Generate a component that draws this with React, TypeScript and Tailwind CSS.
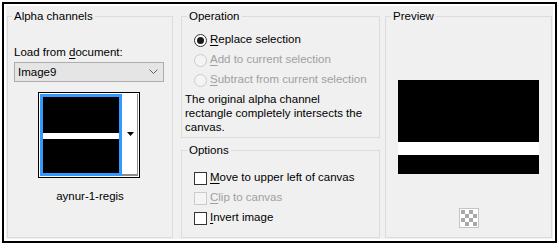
import React from 'react';

const font = { fontFamily: '"Liberation Sans", Arial, sans-serif' };

function U({ children }: { children: React.ReactNode }) {
  return <span className="underline underline-offset-[2px]">{children}</span>;
}

function Radio({ checked, disabled, children }: { checked?: boolean; disabled?: boolean; children: React.ReactNode }) {
  return (
    <div className="flex h-[20px] items-center">
      <span
        className={`ml-[9px] flex h-[13px] w-[13px] items-center justify-center rounded-full border ${
          disabled ? 'border-[#cccccc] bg-[#f4f4f4]' : 'border-[#333333] bg-white'
        }`}>
        {checked && <span className="h-[7px] w-[7px] rounded-full bg-[#1a1a1a]" />}
      </span>
      <span className={`ml-[3px] ${disabled ? 'text-[#a0a0a0]' : 'text-black'}`}>{children}</span>
    </div>
  );
}

function Check({ disabled, children }: { disabled?: boolean; children: React.ReactNode }) {
  return (
    <div className="flex h-[20px] items-center">
      <span
        className={`ml-[9px] h-[13px] w-[13px] border ${
          disabled ? 'border-[#cccccc] bg-[#f4f4f4]' : 'border-[#333333] bg-white'
        }`}
      />
      <span className={`ml-[3px] ${disabled ? 'text-[#a0a0a0]' : 'text-black'}`}>{children}</span>
    </div>
  );
}

export default function App() {
  return (
    <div className="h-[248px] w-[559px] bg-white pl-[2px] pt-[2px] text-[11.5px] text-black" style={font}>
      <div className="h-[241px] w-[555px] border-2 border-black bg-white p-[2px]">
        <div className="flex h-full bg-[#f0f0f0] pl-[1px]">
          {/* Alpha channels */}
          <fieldset className="mt-[3px] flex h-[229px] w-[166px] flex-col border border-[#dcdcdc] px-[6px]">
            <legend className="-ml-[2px] px-[2px] leading-[14px]">Alpha channels</legend>
            <p className="mt-[22px] leading-[14px]">
              Load from <U>d</U>ocument:
            </p>
            <div className="mt-[3px] flex h-[20px] w-[150px] items-center justify-between border border-[#adadad] bg-[#e5e5e5] pl-[3px] pr-[5px]">
              <span className="leading-[14px]">Image9</span>
              <svg width="9" height="6" viewBox="0 0 9 6">
                <polyline points="0.5,0.5 4.5,4.5 8.5,0.5" fill="none" stroke="#606060" strokeWidth="1" />
              </svg>
            </div>
            <div className="ml-[24px] mt-[10px] flex h-[86px] w-[102px] border border-black bg-white p-[1px]">
              <div className="flex h-[82px] w-[82px] flex-col border-[3px] border-[#3399ff] bg-black">
                <div className="mt-[36px] h-[6px] bg-white" />
              </div>
              <div className="flex flex-1 items-center justify-center border-b-2 border-r border-[#8c8c8c] pl-[1px]">
                <svg width="7" height="4" viewBox="0 0 7 4">
                  <polygon points="0,0 7,0 3.5,4" fill="#000" />
                </svg>
              </div>
            </div>
            <p className="mt-[11px] text-center leading-[14px]">aynur-1-regis</p>
          </fieldset>

          {/* Operation + Options */}
          <div className="ml-[8px] flex w-[199px] flex-col">
            <fieldset className="mt-[3px] flex h-[129px] flex-col border border-[#dcdcdc] pl-[3px]">
              <legend className="ml-[2px] px-[2px] leading-[14px]">Operation</legend>
              <div className="mt-[7px]">
                <Radio checked>
                  <U>R</U>eplace selection
                </Radio>
                <Radio disabled>
                  <U>A</U>dd to current selection
                </Radio>
                <Radio disabled>
                  <U>S</U>ubtract from current selection
                </Radio>
              </div>
              <p className="mt-[2px] leading-[14px]">
                The original alpha channel
                <br />
                rectangle completely intersects the
                <br />
                canvas.
              </p>
            </fieldset>
            <fieldset className="mt-[5px] flex h-[95px] flex-col border border-[#dcdcdc] pl-[3px]">
              <legend className="ml-[2px] px-[2px] leading-[14px]">Options</legend>
              <div className="mt-[11px]">
                <Check>
                  <U>M</U>ove to upper left of canvas
                </Check>
                <Check disabled>
                  <U>C</U>lip to canvas
                </Check>
                <Check>
                  <U>I</U>nvert image
                </Check>
              </div>
            </fieldset>
          </div>

          {/* Preview */}
          <fieldset className="ml-[5px] mt-[3px] flex h-[229px] w-[167px] flex-col items-center border border-[#dcdcdc] pl-[5px]">
            <legend className="px-[2px] leading-[14px]">Preview</legend>
            <div className="-ml-[5px] mt-[57px] flex h-[94px] w-[141px] flex-col bg-black">
              <div className="mt-[62px] h-[13px] bg-white" />
            </div>
            <div className="-ml-[5px] mt-[34px] grid h-[20px] w-[20px] grid-cols-4 border border-[#c4c4c4] bg-white p-[1px]">
              {Array.from({ length: 16 }).map((_, i) => (
                <span
                  key={i}
                  className={(Math.floor(i / 4) + i) % 2 === 0 ? 'bg-[#a8a8a8]' : 'bg-white'}
                />
              ))}
            </div>
          </fieldset>
        </div>
      </div>
    </div>
  );
}
